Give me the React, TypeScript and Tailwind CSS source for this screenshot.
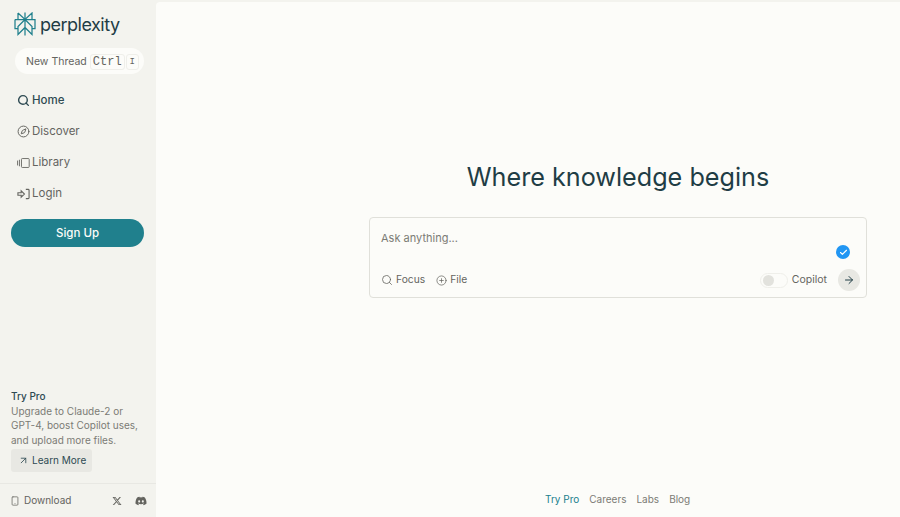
import React from 'react';
import { Search, Compass, ArrowUpRight, ArrowRight, Check, CirclePlus, Smartphone } from 'lucide-react';
import { FaDiscord } from 'react-icons/fa';
import { FaXTwitter } from 'react-icons/fa6';

const font = { fontFamily: 'Inter, "Liberation Sans", sans-serif' };
const mono = { fontFamily: '"Liberation Mono", monospace' };

const Logo = () => (
    <svg width="22" height="24" viewBox="0 0 22 24" fill="none" stroke="#20808d" strokeWidth="1.25" className="shrink-0">
        <path d="M4 1 L11 7.5 L18 1 V7.5 M4 1 V7.5 M1 7.5 H21 V16.5 H18 M1 7.5 V16.5 H4" />
        <path d="M11 7.5 L4 14.5 V22.5 L11 15.5 L18 22.5 V14.5 L11 7.5 M11 0.5 V23.5" />
    </svg>
);

const LibraryIcon = () => (
    <svg width="16" height="14" viewBox="0 0 16 14" fill="none" stroke="#64645f" strokeWidth="1.1">
        <rect x="5.5" y="1.5" width="9.5" height="11" rx="1" />
        <path d="M0.7 4 V10 M3 3 V11" />
    </svg>
);

const LoginIcon = () => (
    <svg width="14" height="12" viewBox="0 0 14 12" fill="none" stroke="#64645f" strokeWidth="1.2">
        <path d="M1 4.6 H4.5 V2.6 L8 6 L4.5 9.4 V7.4 H1 Z" />
        <path d="M9.5 1 H12 Q13 1 13 2 V10 Q13 11 12 11 H9.5" />
    </svg>
);

const navItems = [
    { label: 'Discover', icon: <Compass size={13} strokeWidth={1.8} color="#64645f" /> },
    { label: 'Library', icon: <LibraryIcon /> },
    { label: 'Login', icon: <LoginIcon /> },
];

const Sidebar = () => (
    <aside className="flex h-full w-[156px] shrink-0 flex-col bg-[#f3f3ee]">
        <div className="flex h-[48px] items-center gap-[4px] pl-[14px]">
            <Logo />
            <span className="text-[18px] tracking-[-0.5px] text-[#1f3d45]">perplexity</span>
        </div>
        <div className="mx-[15px] flex h-[26px] w-[129px] items-center justify-between rounded-full bg-[#fcfcf9] pl-[11px] pr-[5px] pt-[1px]">
            <span className="whitespace-nowrap text-[10.5px] text-[#64645f]">New Thread</span>
            <span className="flex gap-[1px]">
                <span className="rounded-[3px] border border-[#efefea] px-[2px] text-[12px] leading-[14px] text-[#64645f]" style={mono}>Ctrl</span>
                <span className="rounded-[3px] border border-[#efefea] px-[3px] text-[9px] leading-[14px] text-[#64645f]" style={mono}>I</span>
            </span>
        </div>
        <nav className="mt-[11px] flex flex-col pl-[17px]">
            <a className="flex h-[31px] items-center gap-[2px] text-[11.5px] font-medium text-[#2e4a52]">
                <Search size={13} strokeWidth={2.6} />
                Home
            </a>
            {navItems.map((item) => (
                <a key={item.label} className="flex h-[31px] items-center gap-[2px] text-[11.5px] text-[#64645f]">
                    <span className="flex w-[13px] justify-center">{item.icon}</span>
                    {item.label}
                </a>
            ))}
        </nav>
        <button className="mx-[11px] mt-[10px] h-[28px] w-[133px] rounded-full bg-[#20808d] pt-[1px] text-[11.5px] font-medium text-[#fcfcf9]">
            Sign Up
        </button>
        <div className="mt-auto px-[11px]">
            <div className="text-[10px] font-medium leading-[15px] text-[#2e4a52]">Try Pro</div>
            <p className="text-[10px] leading-[14.5px] text-[#7b7b75]">
                Upgrade to Claude-2 or GPT-4, boost Copilot uses, and upload more files.
            </p>
            <button className="mt-[2px] flex h-[23px] w-[81px] items-center gap-[3px] rounded-[3px] bg-[#e8e8e3] pl-[7px] text-[10px] text-[#2e4a52]">
                <ArrowUpRight size={11} strokeWidth={1.8} />
                Learn More
            </button>
        </div>
        <div className="mt-[11px] flex h-[34px] items-center border-t border-[#e8e8e3] pl-[10px] pr-[9px] text-[#64645f]">
            <Smartphone size={10} strokeWidth={1.8} />
            <span className="ml-[4px] text-[10px]">Download</span>
            <FaXTwitter size={10} className="ml-auto" />
            <FaDiscord size={12} className="ml-[13px]" />
        </div>
    </aside>
);

const Main = () => (
    <main className="mt-[2px] flex h-[515px] flex-1 flex-col rounded-tl-[4px] bg-[#fcfcf9]">
        <div className="ml-[213px] w-[498px]">
            <h1 className="mt-[158px] text-center text-[25.2px] leading-[34px] text-[#1f3d45]">Where knowledge begins</h1>
            <div className="mt-[23px] flex h-[81px] flex-col rounded-[4px] border border-[#e0e0da] bg-[#fcfcf9] pl-[11px] pr-[6px]">
                <div className="mt-[12px] flex justify-between">
                    <span className="text-[11px] leading-[16px] text-[#7b7b75]">Ask anything...</span>
                </div>
                <div className="flex justify-end pr-[10px]">
                    <span className="mt-[-1px] flex h-[14px] w-[14px] items-center justify-center rounded-full bg-[#2196f3]">
                        <Check size={9} strokeWidth={3} color="#fff" />
                    </span>
                </div>
                <div className="mt-[10px] flex items-center text-[10.5px] text-[#64645f]">
                    <Search size={12} strokeWidth={1.6} />
                    <span className="ml-[3px] text-[10.25px]">Focus</span>
                    <CirclePlus size={11} strokeWidth={1.6} className="ml-[11px]" />
                    <span className="ml-[3px] text-[10.25px]">File</span>
                    <span className="ml-auto flex h-[15px] w-[28px] items-center rounded-full border border-[#efefea] pl-[2px]">
                        <span className="h-[11px] w-[11px] rounded-full bg-[#e2e2dd]" />
                    </span>
                    <span className="ml-[4px]">Copilot</span>
                    <span className="ml-[11px] flex h-[22px] w-[22px] items-center justify-center rounded-full bg-[#e8e8e3] text-[#1f3d45]">
                        <ArrowRight size={12} strokeWidth={2} />
                    </span>
                </div>
            </div>
        </div>
        <footer className="mt-auto mb-[11px] ml-[389px] flex gap-[10px] text-[10px] leading-[14px] text-[#7b7b75]">
            <a className="text-[#20808d]">Try Pro</a>
            <a>Careers</a>
            <a>Labs</a>
            <a>Blog</a>
        </footer>
    </main>
);

export default function App() {
    return (
        <div className="flex h-[517px] w-[900px] overflow-hidden bg-[#f3f3ee]" style={font}>
            <Sidebar />
            <Main />
        </div>
    );
}
